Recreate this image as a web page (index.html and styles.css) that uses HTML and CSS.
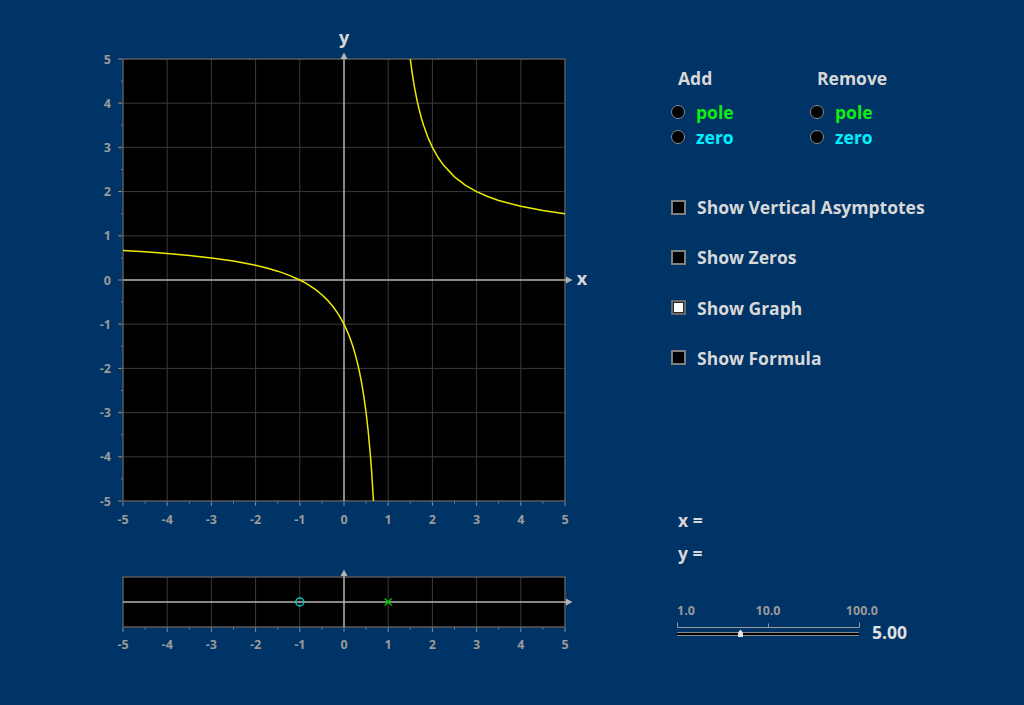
FILE: index.html
```html
<!DOCTYPE html>
<html>
<head>
<meta charset="utf-8">
<link rel="stylesheet" href="styles.css">
</head>
<body>
<div class="app">
  <div class="plots">
    <svg class="main-plot" width="510" height="510" viewBox="0 0 510 510">
      <rect x="33" y="34" width="442" height="442" fill="#000"/>
      <g class="grid">
        <line x1="77.2" y1="34" x2="77.2" y2="476"/>
        <line x1="121.4" y1="34" x2="121.4" y2="476"/>
        <line x1="165.6" y1="34" x2="165.6" y2="476"/>
        <line x1="209.8" y1="34" x2="209.8" y2="476"/>
        <line x1="298.2" y1="34" x2="298.2" y2="476"/>
        <line x1="342.4" y1="34" x2="342.4" y2="476"/>
        <line x1="386.6" y1="34" x2="386.6" y2="476"/>
        <line x1="430.8" y1="34" x2="430.8" y2="476"/>
        <line x1="33" y1="78.2" x2="475" y2="78.2"/>
        <line x1="33" y1="122.4" x2="475" y2="122.4"/>
        <line x1="33" y1="166.6" x2="475" y2="166.6"/>
        <line x1="33" y1="210.8" x2="475" y2="210.8"/>
        <line x1="33" y1="299.2" x2="475" y2="299.2"/>
        <line x1="33" y1="343.4" x2="475" y2="343.4"/>
        <line x1="33" y1="387.6" x2="475" y2="387.6"/>
        <line x1="33" y1="431.8" x2="475" y2="431.8"/>
      </g>
      <g class="ticks">
        <path d="M28 34H33M28 78.2H33M28 122.4H33M28 166.6H33M28 210.8H33M28 255H33M28 299.2H33M28 343.4H33M28 387.6H33M28 431.8H33M28 476H33"/>
        <path d="M31 56.1H33M31 100.3H33M31 144.5H33M31 188.7H33M31 232.9H33M31 277.1H33M31 321.3H33M31 365.5H33M31 409.7H33M31 453.9H33"/>
        <path d="M33 476V481M77.2 476V481M121.4 476V481M165.6 476V481M209.8 476V481M254 476V481M298.2 476V481M342.4 476V481M386.6 476V481M430.8 476V481M475 476V481"/>
        <path d="M55.1 476V478.5M99.3 476V478.5M143.5 476V478.5M187.7 476V478.5M231.9 476V478.5M276.1 476V478.5M320.3 476V478.5M364.5 476V478.5M408.7 476V478.5M452.9 476V478.5"/>
      </g>
      <rect class="frame" x="33" y="34" width="442" height="442"/>
      <g class="axes">
        <line x1="254" y1="476" x2="254" y2="32"/>
        <line x1="33" y1="255" x2="477" y2="255"/>
      </g>
      <g class="arrows">
        <polygon points="254,27.5 250.5,34 257.5,34"/>
        <polygon points="482.5,255 476,251.5 476,258.5"/>
      </g>
      <polyline class="curve" points="33,225.53 55.1,226.87 77.2,228.48 99.3,230.44 121.4,232.9 143.5,236.06 165.6,240.27 176.65,242.95 187.7,246.16 198.75,250.09 209.8,255 215.33,257.95 220.85,261.31 226.38,265.2 231.9,269.73 237.43,275.09 242.95,281.52 248.48,289.38 254,299.2 256.21,303.85 258.42,309.02 260.63,314.8 262.84,321.3 265.05,328.67 267.26,337.09 269.47,346.8 271.68,358.13 273.89,371.53 276.1,387.6 278.31,407.24 280.52,431.8 281.63,446.53 283.47,476"/>
      <polyline class="curve" points="320.3,34 321.41,42.42 322.51,50.07 323.62,57.06 324.72,63.47 326.93,74.8 329.14,84.51 331.35,92.93 333.56,100.3 337.98,112.58 342.4,122.4 347.93,132.22 353.45,140.08 364.5,151.87 375.55,160.28 386.6,166.6 397.65,171.51 408.7,175.44 430.8,181.33 452.9,185.54 475,188.7"/>
      <g class="ylabels">
        <text x="21" y="38.5">5</text>
        <text x="21" y="82.7">4</text>
        <text x="21" y="126.9">3</text>
        <text x="21" y="171.1">2</text>
        <text x="21" y="215.3">1</text>
        <text x="21" y="259.5">0</text>
        <text x="21" y="303.7">-1</text>
        <text x="21" y="347.9">-2</text>
        <text x="21" y="392.1">-3</text>
        <text x="21" y="436.3">-4</text>
        <text x="21" y="480.5">-5</text>
      </g>
      <g class="xlabels">
        <text x="33" y="499">-5</text>
        <text x="77.2" y="499">-4</text>
        <text x="121.4" y="499">-3</text>
        <text x="165.6" y="499">-2</text>
        <text x="209.8" y="499">-1</text>
        <text x="254" y="499">0</text>
        <text x="298.2" y="499">1</text>
        <text x="342.4" y="499">2</text>
        <text x="386.6" y="499">3</text>
        <text x="430.8" y="499">4</text>
        <text x="475" y="499">5</text>
      </g>
      <text class="axis-name" x="254" y="19">y</text>
      <text class="axis-name" x="492" y="260">x</text>
    </svg>

    <svg class="strip" width="510" height="95" viewBox="0 0 510 95">
      <rect x="33" y="12" width="442" height="50" fill="#000"/>
      <g class="grid">
        <line x1="77.2" y1="12" x2="77.2" y2="62"/>
        <line x1="121.4" y1="12" x2="121.4" y2="62"/>
        <line x1="165.6" y1="12" x2="165.6" y2="62"/>
        <line x1="209.8" y1="12" x2="209.8" y2="62"/>
        <line x1="298.2" y1="12" x2="298.2" y2="62"/>
        <line x1="342.4" y1="12" x2="342.4" y2="62"/>
        <line x1="386.6" y1="12" x2="386.6" y2="62"/>
        <line x1="430.8" y1="12" x2="430.8" y2="62"/>
      </g>
      <g class="ticks">
        <path d="M33 62V67M77.2 62V67M121.4 62V67M165.6 62V67M209.8 62V67M254 62V67M298.2 62V67M342.4 62V67M386.6 62V67M430.8 62V67M475 62V67"/>
        <path d="M55.1 62V64.5M99.3 62V64.5M143.5 62V64.5M187.7 62V64.5M231.9 62V64.5M276.1 62V64.5M320.3 62V64.5M364.5 62V64.5M408.7 62V64.5M452.9 62V64.5"/>
      </g>
      <rect class="frame" x="33" y="12" width="442" height="50"/>
      <g class="axes">
        <line x1="254" y1="62" x2="254" y2="9"/>
        <line x1="33" y1="37" x2="477" y2="37"/>
      </g>
      <g class="arrows">
        <polygon points="254,4.5 250.5,11 257.5,11"/>
        <polygon points="482.5,37 476,33.5 476,40.5"/>
      </g>
      <circle class="zero-mark" cx="209.8" cy="37" r="4"/>
      <path class="pole-mark" d="M294.7 33.5L301.7 40.5M301.7 33.5L294.7 40.5"/>
      <g class="xlabels">
        <text x="33" y="84">-5</text>
        <text x="77.2" y="84">-4</text>
        <text x="121.4" y="84">-3</text>
        <text x="165.6" y="84">-2</text>
        <text x="209.8" y="84">-1</text>
        <text x="254" y="84">0</text>
        <text x="298.2" y="84">1</text>
        <text x="342.4" y="84">2</text>
        <text x="386.6" y="84">3</text>
        <text x="430.8" y="84">4</text>
        <text x="475" y="84">5</text>
      </g>
    </svg>
  </div>

  <div class="panel">
    <div class="addremove">
      <div class="group">
        <div class="group-title">Add</div>
        <div class="radio-row"><span class="radio"></span><span class="lbl pole">pole</span></div>
        <div class="radio-row"><span class="radio"></span><span class="lbl zero">zero</span></div>
      </div>
      <div class="group">
        <div class="group-title">Remove</div>
        <div class="radio-row"><span class="radio"></span><span class="lbl pole">pole</span></div>
        <div class="radio-row"><span class="radio"></span><span class="lbl zero">zero</span></div>
      </div>
    </div>

    <div class="checks">
      <div class="check-row"><span class="box"></span><span class="lbl">Show Vertical Asymptotes</span></div>
      <div class="check-row"><span class="box"></span><span class="lbl">Show Zeros</span></div>
      <div class="check-row"><span class="box checked"></span><span class="lbl">Show Graph</span></div>
      <div class="check-row"><span class="box"></span><span class="lbl">Show Formula</span></div>
    </div>

    <div class="coords">
      <div class="coord">x =</div>
      <div class="coord">y =</div>
    </div>

    <svg class="slider" width="250" height="45" viewBox="0 0 250 45">
      <g class="scale-labels">
        <text x="7" y="14.5">1.0</text>
        <text x="98" y="14.5" text-anchor="middle">10.0</text>
        <text x="208" y="14.5" text-anchor="end">100.0</text>
      </g>
      <path class="scale" d="M7.5 22.5V27.5H189.5V22.5M98.5 27.5V23.5"/>
      <line class="track-edge" x1="7" y1="32.5" x2="189" y2="32.5"/>
      <line class="track-core" x1="7" y1="34" x2="189" y2="34"/>
      <line class="track-edge" x1="7" y1="35.5" x2="189" y2="35.5"/>
      <path class="handle" d="M70.5 29.5L73 32.5V37H68V32.5Z"/>
      <text class="slider-value" x="202" y="38.5">5.00</text>
    </svg>
  </div>
</div>
</body>
</html>
```

FILE: styles.css
```css
html, body {
  margin: 0;
  padding: 0;
}

body {
  width: 1024px;
  height: 705px;
  overflow: hidden;
  background: #003366;
  font-family: "Open Sans", "Noto Sans", sans-serif;
  font-weight: 700;
  color: #d8d8d8;
}

.app {
  display: flex;
  gap: 70px;
  padding: 25px 0 0 90px;
}

.plots {
  display: flex;
  flex-direction: column;
  gap: 30px;
  width: 510px;
}

.plots svg {
  display: block;
}

.grid line {
  stroke: #3a3a3a;
  stroke-width: 1;
}

.ticks path {
  stroke: #8a8a8a;
  stroke-width: 1;
  fill: none;
}

.frame {
  fill: none;
  stroke: #5a5a5a;
  stroke-width: 1.5;
}

.axes line {
  stroke: #b4b4b4;
  stroke-width: 1.5;
}

.arrows polygon {
  fill: #b4b4b4;
}

.curve {
  fill: none;
  stroke: #ecec00;
  stroke-width: 1.5;
  stroke-linejoin: round;
}

.ylabels text,
.xlabels text {
  font-family: "Open Sans", "Noto Sans", sans-serif;
  font-weight: 700;
  font-size: 12.5px;
  fill: #9a9a9a;
}

.ylabels text {
  text-anchor: end;
}

.xlabels text {
  text-anchor: middle;
}

.axis-name {
  font-family: "Open Sans", "Noto Sans", sans-serif;
  font-weight: 700;
  font-size: 18px;
  fill: #d8d8d8;
  text-anchor: middle;
}

.zero-mark {
  fill: none;
  stroke: #00c8c8;
  stroke-width: 1.5;
}

.pole-mark {
  stroke: #00c800;
  stroke-width: 1.5;
  fill: none;
}

.panel {
  display: flex;
  flex-direction: column;
  padding-top: 42px;
  width: 300px;
}

.addremove {
  display: flex;
}

.group {
  width: 139px;
  display: flex;
  flex-direction: column;
}

.group-title {
  font-size: 17.5px;
  line-height: 22px;
  padding-left: 8px;
  margin-bottom: 10px;
  color: #d8d8d8;
}

.radio-row {
  display: flex;
  align-items: center;
  height: 25px;
}

.radio {
  width: 12px;
  height: 12px;
  border-radius: 50%;
  background: #000;
  border: 1.5px solid #8a8a8a;
  margin-left: 1px;
  flex: none;
}

.lbl {
  font-size: 17.5px;
  line-height: 22px;
  margin-left: 11px;
}

.pole {
  color: #10ee10;
}

.zero {
  color: #00f0ff;
}

.checks {
  display: flex;
  flex-direction: column;
  gap: 28.3px;
  margin-top: 47px;
}

.check-row {
  display: flex;
  align-items: center;
  height: 22px;
}

.box {
  width: 11px;
  height: 11px;
  margin-left: 1px;
  background: #000;
  border: 2px solid #808080;
  flex: none;
}

.box.checked {
  background: #fff;
  box-shadow: inset 0 0 0 1px #2a2a2a;
  border-color: #6a6a6a;
}

.coords {
  display: flex;
  flex-direction: column;
  gap: 11px;
  margin-top: 140px;
  padding-left: 8px;
}

.coord {
  font-size: 17.5px;
  line-height: 22px;
}

.slider {
  display: block;
  margin-top: 36px;
}

.scale-labels text {
  font-family: "Open Sans", "Noto Sans", sans-serif;
  font-weight: 700;
  font-size: 12.5px;
  fill: #9a9a9a;
}

.scale {
  fill: none;
  stroke: #9a9a9a;
  stroke-width: 1;
}

.track-edge {
  stroke: #8a8a8a;
  stroke-width: 1;
}

.track-core {
  stroke: #000;
  stroke-width: 2;
}

.handle {
  fill: #e0e0e0;
}

.slider-value {
  font-family: "Open Sans", "Noto Sans", sans-serif;
  font-weight: 700;
  font-size: 17.5px;
  fill: #e0e0e0;
}
```
